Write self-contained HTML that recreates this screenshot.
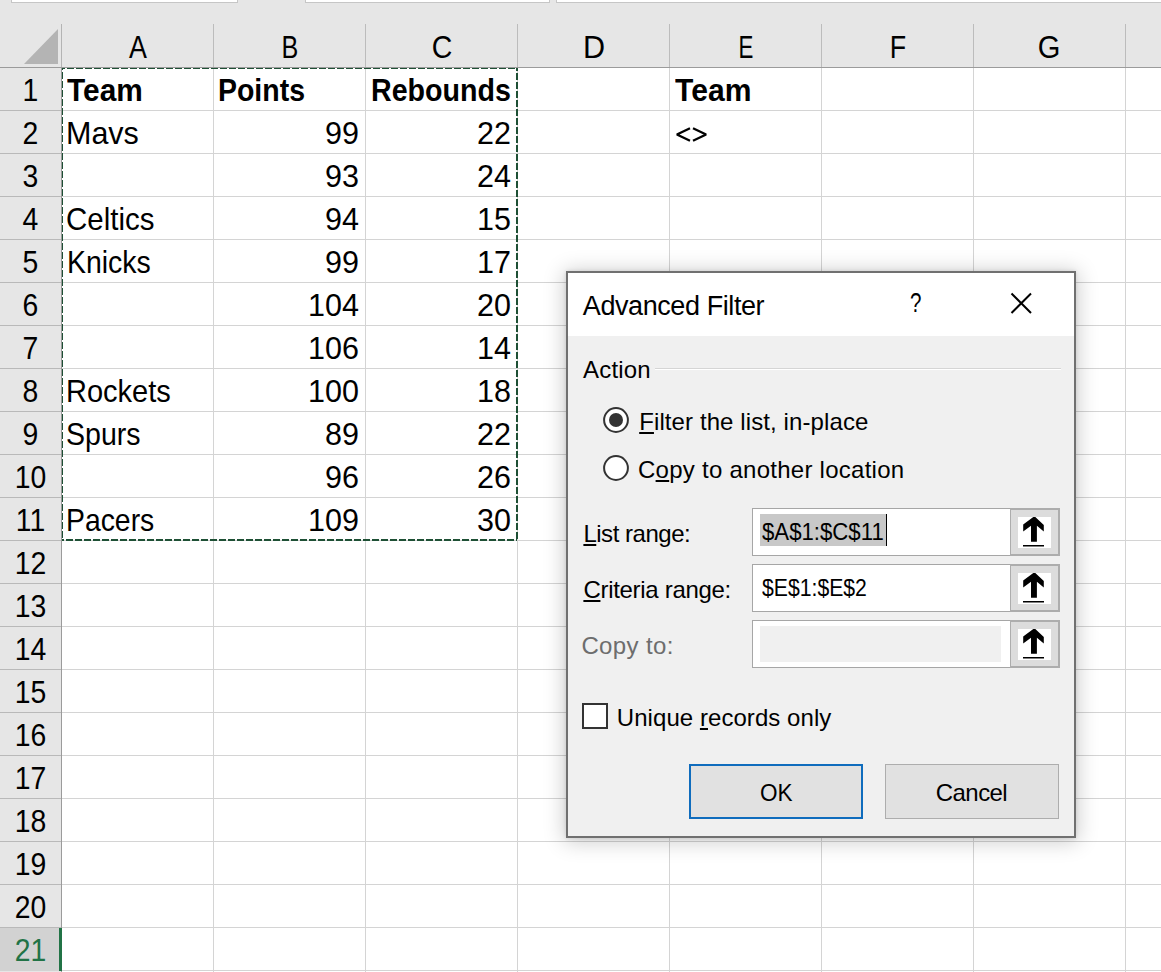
<!DOCTYPE html><html><head><meta charset="utf-8"><style>
*{margin:0;padding:0;box-sizing:border-box}
html,body{width:1161px;height:972px;overflow:hidden;background:#fff;font-family:"Liberation Sans",sans-serif;color:#000}
.a{position:absolute}
.t{position:absolute;white-space:nowrap;line-height:1}
</style></head><body><div class="a" style="left:0;top:0;width:1161px;height:67px;background:#e6e6e6"></div>
<div class="a" style="left:0;top:67px;width:61px;height:905px;background:#e6e6e6"></div>
<div class="a" style="left:11px;top:-2px;width:227px;height:5px;background:#fff;border:1px solid #c6c6c6"></div>
<div class="a" style="left:305px;top:-2px;width:245px;height:5px;background:#fff;border:1px solid #c6c6c6"></div>
<div class="a" style="left:556px;top:-2px;width:619px;height:5px;background:#fff;border:1px solid #c6c6c6"></div>
<svg class="a" style="left:0;top:0" width="62" height="67"><polygon points="24,64 58,64 58,29" fill="#b4b4b4"/></svg>
<div class="a" style="left:213px;top:24px;width:1px;height:43px;background:#bcbcbc"></div>
<div class="a" style="left:365px;top:24px;width:1px;height:43px;background:#bcbcbc"></div>
<div class="a" style="left:517px;top:24px;width:1px;height:43px;background:#bcbcbc"></div>
<div class="a" style="left:669px;top:24px;width:1px;height:43px;background:#bcbcbc"></div>
<div class="a" style="left:821px;top:24px;width:1px;height:43px;background:#bcbcbc"></div>
<div class="a" style="left:973px;top:24px;width:1px;height:43px;background:#bcbcbc"></div>
<div class="a" style="left:1125px;top:24px;width:1px;height:43px;background:#bcbcbc"></div>
<div class="a" style="left:213px;top:68px;width:1px;height:904px;background:#d4d4d4"></div>
<div class="a" style="left:365px;top:68px;width:1px;height:904px;background:#d4d4d4"></div>
<div class="a" style="left:517px;top:68px;width:1px;height:904px;background:#d4d4d4"></div>
<div class="a" style="left:669px;top:68px;width:1px;height:904px;background:#d4d4d4"></div>
<div class="a" style="left:821px;top:68px;width:1px;height:904px;background:#d4d4d4"></div>
<div class="a" style="left:973px;top:68px;width:1px;height:904px;background:#d4d4d4"></div>
<div class="a" style="left:1125px;top:68px;width:1px;height:904px;background:#d4d4d4"></div>
<div class="a" style="left:62px;top:110px;width:1099px;height:1px;background:#d4d4d4"></div>
<div class="a" style="left:0;top:110px;width:61px;height:1px;background:#b9b9b9"></div>
<div class="a" style="left:62px;top:153px;width:1099px;height:1px;background:#d4d4d4"></div>
<div class="a" style="left:0;top:153px;width:61px;height:1px;background:#b9b9b9"></div>
<div class="a" style="left:62px;top:196px;width:1099px;height:1px;background:#d4d4d4"></div>
<div class="a" style="left:0;top:196px;width:61px;height:1px;background:#b9b9b9"></div>
<div class="a" style="left:62px;top:239px;width:1099px;height:1px;background:#d4d4d4"></div>
<div class="a" style="left:0;top:239px;width:61px;height:1px;background:#b9b9b9"></div>
<div class="a" style="left:62px;top:282px;width:1099px;height:1px;background:#d4d4d4"></div>
<div class="a" style="left:0;top:282px;width:61px;height:1px;background:#b9b9b9"></div>
<div class="a" style="left:62px;top:325px;width:1099px;height:1px;background:#d4d4d4"></div>
<div class="a" style="left:0;top:325px;width:61px;height:1px;background:#b9b9b9"></div>
<div class="a" style="left:62px;top:368px;width:1099px;height:1px;background:#d4d4d4"></div>
<div class="a" style="left:0;top:368px;width:61px;height:1px;background:#b9b9b9"></div>
<div class="a" style="left:62px;top:411px;width:1099px;height:1px;background:#d4d4d4"></div>
<div class="a" style="left:0;top:411px;width:61px;height:1px;background:#b9b9b9"></div>
<div class="a" style="left:62px;top:454px;width:1099px;height:1px;background:#d4d4d4"></div>
<div class="a" style="left:0;top:454px;width:61px;height:1px;background:#b9b9b9"></div>
<div class="a" style="left:62px;top:497px;width:1099px;height:1px;background:#d4d4d4"></div>
<div class="a" style="left:0;top:497px;width:61px;height:1px;background:#b9b9b9"></div>
<div class="a" style="left:62px;top:540px;width:1099px;height:1px;background:#d4d4d4"></div>
<div class="a" style="left:0;top:540px;width:61px;height:1px;background:#b9b9b9"></div>
<div class="a" style="left:62px;top:583px;width:1099px;height:1px;background:#d4d4d4"></div>
<div class="a" style="left:0;top:583px;width:61px;height:1px;background:#b9b9b9"></div>
<div class="a" style="left:62px;top:626px;width:1099px;height:1px;background:#d4d4d4"></div>
<div class="a" style="left:0;top:626px;width:61px;height:1px;background:#b9b9b9"></div>
<div class="a" style="left:62px;top:669px;width:1099px;height:1px;background:#d4d4d4"></div>
<div class="a" style="left:0;top:669px;width:61px;height:1px;background:#b9b9b9"></div>
<div class="a" style="left:62px;top:712px;width:1099px;height:1px;background:#d4d4d4"></div>
<div class="a" style="left:0;top:712px;width:61px;height:1px;background:#b9b9b9"></div>
<div class="a" style="left:62px;top:755px;width:1099px;height:1px;background:#d4d4d4"></div>
<div class="a" style="left:0;top:755px;width:61px;height:1px;background:#b9b9b9"></div>
<div class="a" style="left:62px;top:798px;width:1099px;height:1px;background:#d4d4d4"></div>
<div class="a" style="left:0;top:798px;width:61px;height:1px;background:#b9b9b9"></div>
<div class="a" style="left:62px;top:841px;width:1099px;height:1px;background:#d4d4d4"></div>
<div class="a" style="left:0;top:841px;width:61px;height:1px;background:#b9b9b9"></div>
<div class="a" style="left:62px;top:884px;width:1099px;height:1px;background:#d4d4d4"></div>
<div class="a" style="left:0;top:884px;width:61px;height:1px;background:#b9b9b9"></div>
<div class="a" style="left:62px;top:927px;width:1099px;height:1px;background:#d4d4d4"></div>
<div class="a" style="left:0;top:927px;width:61px;height:1px;background:#b9b9b9"></div>
<div class="a" style="left:62px;top:970px;width:1099px;height:1px;background:#d4d4d4"></div>
<div class="a" style="left:0;top:970px;width:61px;height:1px;background:#b9b9b9"></div>
<div class="a" style="left:0;top:928px;width:59px;height:43px;background:#d2d2d2"></div>
<div class="a" style="left:0;top:67px;width:1161px;height:1px;background:#9b9b9b"></div>
<div class="a" style="left:61px;top:24px;width:1px;height:43px;background:#b4b4b4"></div><div class="a" style="left:61px;top:67px;width:1px;height:905px;background:#9b9b9b"></div>
<div class="a" style="left:59px;top:928px;width:3px;height:43px;background:#217346"></div>
<div class="t" style="left:87.50px;width:100px;text-align:center;top:32.18px;font-size:30.5px;transform:scaleX(0.880)">A</div>
<div class="t" style="left:239.95px;width:100px;text-align:center;top:32.18px;font-size:30.5px;transform:scaleX(0.826)">B</div>
<div class="t" style="left:392.05px;width:100px;text-align:center;top:32.18px;font-size:30.5px;transform:scaleX(0.935)">C</div>
<div class="t" style="left:544.00px;width:100px;text-align:center;top:32.18px;font-size:30.5px;transform:scaleX(1.003)">D</div>
<div class="t" style="left:695.55px;width:100px;text-align:center;top:32.18px;font-size:30.5px;transform:scaleX(0.730)">E</div>
<div class="t" style="left:848.00px;width:100px;text-align:center;top:32.18px;font-size:30.5px;transform:scaleX(0.880)">F</div>
<div class="t" style="left:999.15px;width:100px;text-align:center;top:32.18px;font-size:30.5px;transform:scaleX(0.953)">G</div>
<div class="t" style="left:0;width:61px;text-align:center;top:75.18px;font-size:30.5px;color:#000;transform:scaleX(0.93)">1</div>
<div class="t" style="left:0;width:61px;text-align:center;top:118.18px;font-size:30.5px;color:#000;transform:scaleX(0.93)">2</div>
<div class="t" style="left:0;width:61px;text-align:center;top:161.18px;font-size:30.5px;color:#000;transform:scaleX(0.93)">3</div>
<div class="t" style="left:0;width:61px;text-align:center;top:204.18px;font-size:30.5px;color:#000;transform:scaleX(0.93)">4</div>
<div class="t" style="left:0;width:61px;text-align:center;top:247.18px;font-size:30.5px;color:#000;transform:scaleX(0.93)">5</div>
<div class="t" style="left:0;width:61px;text-align:center;top:290.18px;font-size:30.5px;color:#000;transform:scaleX(0.93)">6</div>
<div class="t" style="left:0;width:61px;text-align:center;top:333.18px;font-size:30.5px;color:#000;transform:scaleX(0.93)">7</div>
<div class="t" style="left:0;width:61px;text-align:center;top:376.18px;font-size:30.5px;color:#000;transform:scaleX(0.93)">8</div>
<div class="t" style="left:0;width:61px;text-align:center;top:419.18px;font-size:30.5px;color:#000;transform:scaleX(0.93)">9</div>
<div class="t" style="left:0;width:61px;text-align:center;top:462.18px;font-size:30.5px;color:#000;transform:scaleX(0.93)">10</div>
<div class="t" style="left:0;width:61px;text-align:center;top:505.18px;font-size:30.5px;color:#000;transform:scaleX(0.93)">11</div>
<div class="t" style="left:0;width:61px;text-align:center;top:548.18px;font-size:30.5px;color:#000;transform:scaleX(0.93)">12</div>
<div class="t" style="left:0;width:61px;text-align:center;top:591.18px;font-size:30.5px;color:#000;transform:scaleX(0.93)">13</div>
<div class="t" style="left:0;width:61px;text-align:center;top:634.18px;font-size:30.5px;color:#000;transform:scaleX(0.93)">14</div>
<div class="t" style="left:0;width:61px;text-align:center;top:677.18px;font-size:30.5px;color:#000;transform:scaleX(0.93)">15</div>
<div class="t" style="left:0;width:61px;text-align:center;top:720.18px;font-size:30.5px;color:#000;transform:scaleX(0.93)">16</div>
<div class="t" style="left:0;width:61px;text-align:center;top:763.18px;font-size:30.5px;color:#000;transform:scaleX(0.93)">17</div>
<div class="t" style="left:0;width:61px;text-align:center;top:806.18px;font-size:30.5px;color:#000;transform:scaleX(0.93)">18</div>
<div class="t" style="left:0;width:61px;text-align:center;top:849.18px;font-size:30.5px;color:#000;transform:scaleX(0.93)">19</div>
<div class="t" style="left:0;width:61px;text-align:center;top:892.18px;font-size:30.5px;color:#000;transform:scaleX(0.93)">20</div>
<div class="t" style="left:0;width:61px;text-align:center;top:935.18px;font-size:30.5px;color:#217346;transform:scaleX(0.93)">21</div>
<div class="t" style="top:75.18px;font-size:30.5px;left:67.20px;transform:scaleX(0.9790);transform-origin:0 0;font-weight:bold;">Team</div>
<div class="t" style="top:75.18px;font-size:30.5px;left:218.20px;transform:scaleX(0.9333);transform-origin:0 0;font-weight:bold;">Points</div>
<div class="t" style="top:75.18px;font-size:30.5px;left:370.80px;transform:scaleX(0.9386);transform-origin:0 0;font-weight:bold;">Rebounds</div>
<div class="t" style="top:75.18px;font-size:30.5px;left:675.20px;transform:scaleX(0.9868);transform-origin:0 0;font-weight:bold;">Team</div>
<div class="t" style="top:118.18px;font-size:30.5px;letter-spacing:0.000px;left:66px;">Mavs</div>
<div class="t" style="top:118.18px;font-size:30.5px;letter-spacing:0.000px;right:802px;text-align:right;margin-right:0.000px;">99</div>
<div class="t" style="top:118.18px;font-size:30.5px;letter-spacing:0.000px;right:650px;text-align:right;margin-right:0.000px;">22</div>
<svg class="a" style="left:0;top:0" width="720" height="150"><polyline points="690,128.2 676.9,134.5 690,140.8" fill="none" stroke="#000" stroke-width="2.3" stroke-linejoin="bevel"/><polyline points="693,128.2 706.1,134.5 693,140.8" fill="none" stroke="#000" stroke-width="2.3" stroke-linejoin="bevel"/></svg>
<div class="t" style="top:161.18px;font-size:30.5px;letter-spacing:0.000px;right:802px;text-align:right;margin-right:0.000px;">93</div>
<div class="t" style="top:161.18px;font-size:30.5px;letter-spacing:0.000px;right:650px;text-align:right;margin-right:0.000px;">24</div>
<div class="t" style="top:204.18px;font-size:30.5px;left:66.00px;transform:scaleX(0.9660);transform-origin:0 0;">Celtics</div>
<div class="t" style="top:204.18px;font-size:30.5px;letter-spacing:0.000px;right:802px;text-align:right;margin-right:0.000px;">94</div>
<div class="t" style="top:204.18px;font-size:30.5px;letter-spacing:0.000px;right:650px;text-align:right;margin-right:0.000px;">15</div>
<div class="t" style="top:247.18px;font-size:30.5px;left:67.00px;transform:scaleX(0.9327);transform-origin:0 0;">Knicks</div>
<div class="t" style="top:247.18px;font-size:30.5px;letter-spacing:0.000px;right:802px;text-align:right;margin-right:0.000px;">99</div>
<div class="t" style="top:247.18px;font-size:30.5px;letter-spacing:0.000px;right:650px;text-align:right;margin-right:0.000px;">17</div>
<div class="t" style="top:290.18px;font-size:30.5px;letter-spacing:0.000px;right:802px;text-align:right;margin-right:0.000px;">104</div>
<div class="t" style="top:290.18px;font-size:30.5px;letter-spacing:0.000px;right:650px;text-align:right;margin-right:0.000px;">20</div>
<div class="t" style="top:333.18px;font-size:30.5px;letter-spacing:0.000px;right:802px;text-align:right;margin-right:0.000px;">106</div>
<div class="t" style="top:333.18px;font-size:30.5px;letter-spacing:0.000px;right:650px;text-align:right;margin-right:0.000px;">14</div>
<div class="t" style="top:376.18px;font-size:30.5px;left:66.40px;transform:scaleX(0.9511);transform-origin:0 0;">Rockets</div>
<div class="t" style="top:376.18px;font-size:30.5px;letter-spacing:0.000px;right:802px;text-align:right;margin-right:0.000px;">100</div>
<div class="t" style="top:376.18px;font-size:30.5px;letter-spacing:0.000px;right:650px;text-align:right;margin-right:0.000px;">18</div>
<div class="t" style="top:419.18px;font-size:30.5px;left:66.40px;transform:scaleX(0.9351);transform-origin:0 0;">Spurs</div>
<div class="t" style="top:419.18px;font-size:30.5px;letter-spacing:0.000px;right:802px;text-align:right;margin-right:0.000px;">89</div>
<div class="t" style="top:419.18px;font-size:30.5px;letter-spacing:0.000px;right:650px;text-align:right;margin-right:0.000px;">22</div>
<div class="t" style="top:462.18px;font-size:30.5px;letter-spacing:0.000px;right:802px;text-align:right;margin-right:0.000px;">96</div>
<div class="t" style="top:462.18px;font-size:30.5px;letter-spacing:0.000px;right:650px;text-align:right;margin-right:0.000px;">26</div>
<div class="t" style="top:505.18px;font-size:30.5px;left:66.40px;transform:scaleX(0.9298);transform-origin:0 0;">Pacers</div>
<div class="t" style="top:505.18px;font-size:30.5px;letter-spacing:0.000px;right:802px;text-align:right;margin-right:0.000px;">109</div>
<div class="t" style="top:505.18px;font-size:30.5px;letter-spacing:0.000px;right:650px;text-align:right;margin-right:0.000px;">30</div>
<svg class="a" style="left:0;top:0" width="1161" height="972"><line x1="62" y1="68.5" x2="517" y2="68.5" stroke="#1e5035" stroke-width="1" stroke-dasharray="7 2" stroke-dashoffset="4"/><line x1="517" y1="68" x2="517" y2="541" stroke="#1e5035" stroke-width="2" stroke-dasharray="7 2" stroke-dashoffset="4"/><line x1="517" y1="540" x2="62" y2="540" stroke="#1e5035" stroke-width="2" stroke-dasharray="7 2" stroke-dashoffset="6"/><line x1="62.5" y1="68" x2="62.5" y2="541" stroke="#1e5035" stroke-width="1" stroke-dasharray="7 2" stroke-dashoffset="5"/></svg><div class="a" style="left:566px;top:271px;width:510px;height:567px;background:#f0f0f0;border:2px solid #707070;box-shadow:0 2px 20px 2px rgba(0,0,0,0.2),0 0 4px rgba(0,0,0,0.12)"></div>
<div class="a" style="left:568px;top:273px;width:506px;height:63px;background:#fff"></div>
<div class="t" style="left:582.80px;top:293.14px;font-size:27px;letter-spacing:-0.414px;color:#000;">Advanced Filter</div>
<div class="t" style="left:910.00px;top:290.14px;font-size:27px;color:#000;transform:scaleX(0.7641);transform-origin:0 0;">?</div>
<svg class="a" style="left:1005px;top:287px" width="32" height="32"><path d="M6.5 6.5 L26 26 M26 6.5 L6.5 26" stroke="#000" stroke-width="2" fill="none"/></svg>
<div class="t" style="left:583.00px;top:357.68px;font-size:24px;letter-spacing:0.200px;color:#000;">Action</div>
<div class="a" style="left:655px;top:368px;width:406px;height:1px;background:#d5d5d5"></div>
<div class="a" style="left:655px;top:369px;width:406px;height:1px;background:#fff"></div>
<svg class="a" style="left:600px;top:404px" width="32" height="32"><circle cx="16" cy="16" r="11.9" fill="#fff" stroke="#333" stroke-width="2"/><circle cx="16" cy="16" r="7" fill="#333"/></svg>
<svg class="a" style="left:600px;top:452px" width="32" height="32"><circle cx="16" cy="16" r="11.9" fill="#fff" stroke="#333" stroke-width="2"/></svg>
<div class="t" style="left:639.20px;top:409.68px;font-size:24px;letter-spacing:0.100px;color:#000;"><u>F</u>ilter the list, in-place</div>
<div class="t" style="left:638.00px;top:457.68px;font-size:24px;letter-spacing:0.261px;color:#000;">C<u>o</u>py to another location</div>
<div class="t" style="left:583.40px;top:521.68px;font-size:24px;letter-spacing:-0.480px;color:#000;"><u>L</u>ist range:</div>
<div class="t" style="left:583.40px;top:577.68px;font-size:24px;letter-spacing:-0.300px;color:#000;"><u>C</u>riteria range:</div>
<div class="t" style="left:581.40px;top:633.68px;font-size:24px;letter-spacing:0.371px;color:#6d6d6d;">Copy to:</div>
<div class="a" style="left:752px;top:508px;width:259px;height:48px;background:#fff;border:1px solid #a6a6a6"></div>
<div class="a" style="left:1010px;top:508px;width:50px;height:48px;background:#dcdcdc;border:2px solid #adadad;border-left-width:1px"></div>
<div class="a" style="left:1018px;top:517px;width:33px;height:31px;background:#fff"></div>
<svg class="a" style="left:1018px;top:516px" width="33" height="31"><path d="M15.3 1 L17.3 1 L25.8 8.9 L25.8 15.5 L18.9 9.7 L18.9 25.7 L13 25.7 L13 9.7 L5.2 15.4 L5.2 8.5 Z" fill="#000"/><rect x="5" y="29" width="21" height="1.5" fill="#000"/></svg>
<div class="a" style="left:752px;top:564px;width:259px;height:48px;background:#fff;border:1px solid #a6a6a6"></div>
<div class="a" style="left:1010px;top:564px;width:50px;height:48px;background:#dcdcdc;border:2px solid #adadad;border-left-width:1px"></div>
<div class="a" style="left:1018px;top:573px;width:33px;height:31px;background:#fff"></div>
<svg class="a" style="left:1018px;top:572px" width="33" height="31"><path d="M15.3 1 L17.3 1 L25.8 8.9 L25.8 15.5 L18.9 9.7 L18.9 25.7 L13 25.7 L13 9.7 L5.2 15.4 L5.2 8.5 Z" fill="#000"/><rect x="5" y="29" width="21" height="1.5" fill="#000"/></svg>
<div class="a" style="left:752px;top:620px;width:259px;height:48px;background:#fff;border:1px solid #a6a6a6"></div>
<div class="a" style="left:1010px;top:620px;width:50px;height:48px;background:#dcdcdc;border:2px solid #adadad;border-left-width:1px"></div>
<div class="a" style="left:1018px;top:629px;width:33px;height:31px;background:#fff"></div>
<svg class="a" style="left:1018px;top:628px" width="33" height="31"><path d="M15.3 1 L17.3 1 L25.8 8.9 L25.8 15.5 L18.9 9.7 L18.9 25.7 L13 25.7 L13 9.7 L5.2 15.4 L5.2 8.5 Z" fill="#000"/><rect x="5" y="29" width="21" height="1.5" fill="#000"/></svg>
<div class="a" style="left:760px;top:514px;width:126px;height:32px;background:#c8c8c8"></div>
<div class="a" style="left:886px;top:514px;width:1px;height:32px;background:#000"></div>
<div class="t" style="left:761.80px;top:519.68px;font-size:24px;color:#000;transform:scaleX(0.9246);transform-origin:0 0;">$A$1:$C$11</div>
<div class="t" style="left:761.80px;top:575.68px;font-size:24px;color:#000;transform:scaleX(0.8831);transform-origin:0 0;">$E$1:$E$2</div>
<div class="a" style="left:760px;top:626px;width:241px;height:36px;background:#f0f0f0"></div>
<div class="a" style="left:582px;top:703px;width:26px;height:26px;background:#fff;border:2px solid #333"></div>
<div class="t" style="left:616.80px;top:705.68px;font-size:24px;letter-spacing:0.056px;color:#000;">Unique <u>r</u>ecords only</div>
<div class="a" style="left:689px;top:764px;width:174px;height:55px;background:#e1e1e1;border:2px solid #0f6cbd"></div>
<div class="a" style="left:885px;top:764px;width:174px;height:55px;background:#e1e1e1;border:1px solid #adadad"></div>
<div class="t" style="left:759.80px;top:780.68px;font-size:24px;color:#000;transform:scaleX(0.9394);transform-origin:0 0;">OK</div>
<div class="t" style="left:935.80px;top:780.68px;font-size:24px;letter-spacing:-0.560px;color:#000;">Cancel</div></body></html>
